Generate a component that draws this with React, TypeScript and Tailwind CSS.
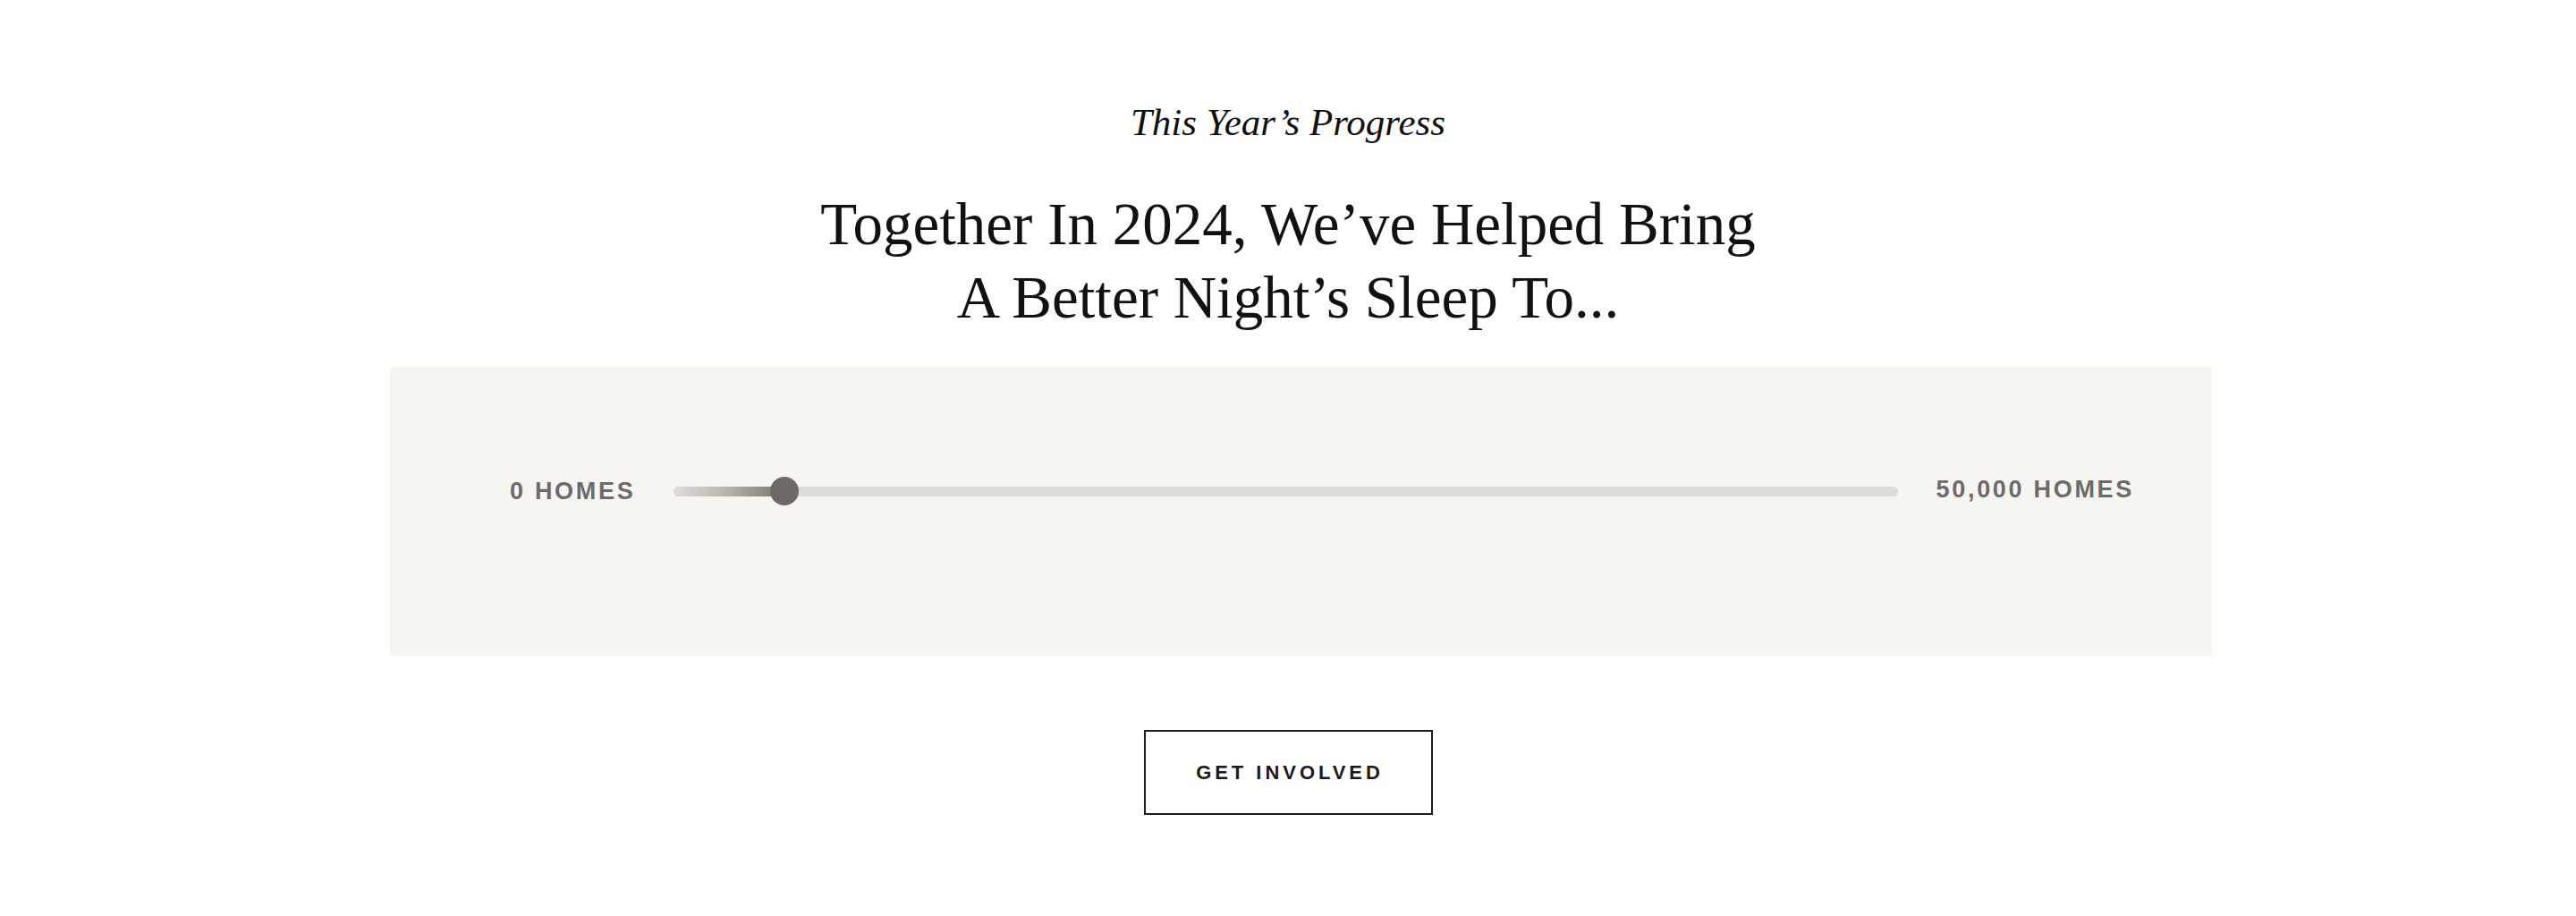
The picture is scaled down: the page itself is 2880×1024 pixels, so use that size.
import React from 'react';

const serif = { fontFamily: '"Liberation Serif", "Times New Roman", serif' };
const sans = { fontFamily: '"Liberation Sans", Arial, sans-serif' };

function ProgressSlider({ value, max }: { value: number; max: number }) {
  const pct = (value / max) * 100;
  return (
    <div className="relative h-[32px] flex-1">
      <div className="absolute left-0 right-0 top-[11px] h-[11px] rounded-full bg-[#dddcdb]" />
      <div
        className="absolute left-0 top-[11px] h-[11px] rounded-full bg-gradient-to-r from-[#dfddd8] via-[#b7b2a8] to-[#7a746f]"
        style={{ width: `${pct}%` }}
      />
      <div
        className="absolute top-0 h-[32px] w-[32px] -translate-x-1/2 rounded-full bg-[#6f6965]"
        style={{ left: `${pct}%` }}
      />
    </div>
  );
}

export default function App() {
  return (
    <div className="min-h-screen w-full bg-[#fefefc] text-[#111111]">
      <div className="flex flex-col pt-[111px]">
        <p className="text-center text-[43px] italic leading-[52px]" style={serif}>
          This Year’s Progress
        </p>
        <h2 className="mt-[46px] text-center text-[67px] font-normal leading-[82px]" style={serif}>
          Together In 2024, We’ve Helped Bring
          <br />
          A Better Night’s Sleep To...
        </h2>

        <div className="mt-[37px] ml-[436px] h-[323px] w-[2037px] bg-[#f7f5f2] pt-[123px]">
          <div className="flex items-center gap-[43px] pl-[134px] pr-[87px]">
            <span
              className="whitespace-nowrap text-[27px] font-bold leading-none tracking-[0.1em] text-[#6d6b69]"
              style={sans}
            >
              0 HOMES
            </span>
            <ProgressSlider value={4500} max={50000} />
            <span
              className="-mt-[4px] whitespace-nowrap text-[27px] font-bold leading-none tracking-[0.1em] text-[#6d6b69]"
              style={sans}
            >
              50,000 HOMES
            </span>
          </div>
        </div>

        <div className="mt-[83px] flex justify-center">
          <button
            type="button"
            className="flex h-[95px] w-[323px] items-center justify-center border-2 border-[#1c1c1c] pl-[4px] text-[22px] font-bold tracking-[0.18em] text-[#1a1a1a]"
            style={sans}
          >
            GET INVOLVED
          </button>
        </div>
      </div>
    </div>
  );
}
